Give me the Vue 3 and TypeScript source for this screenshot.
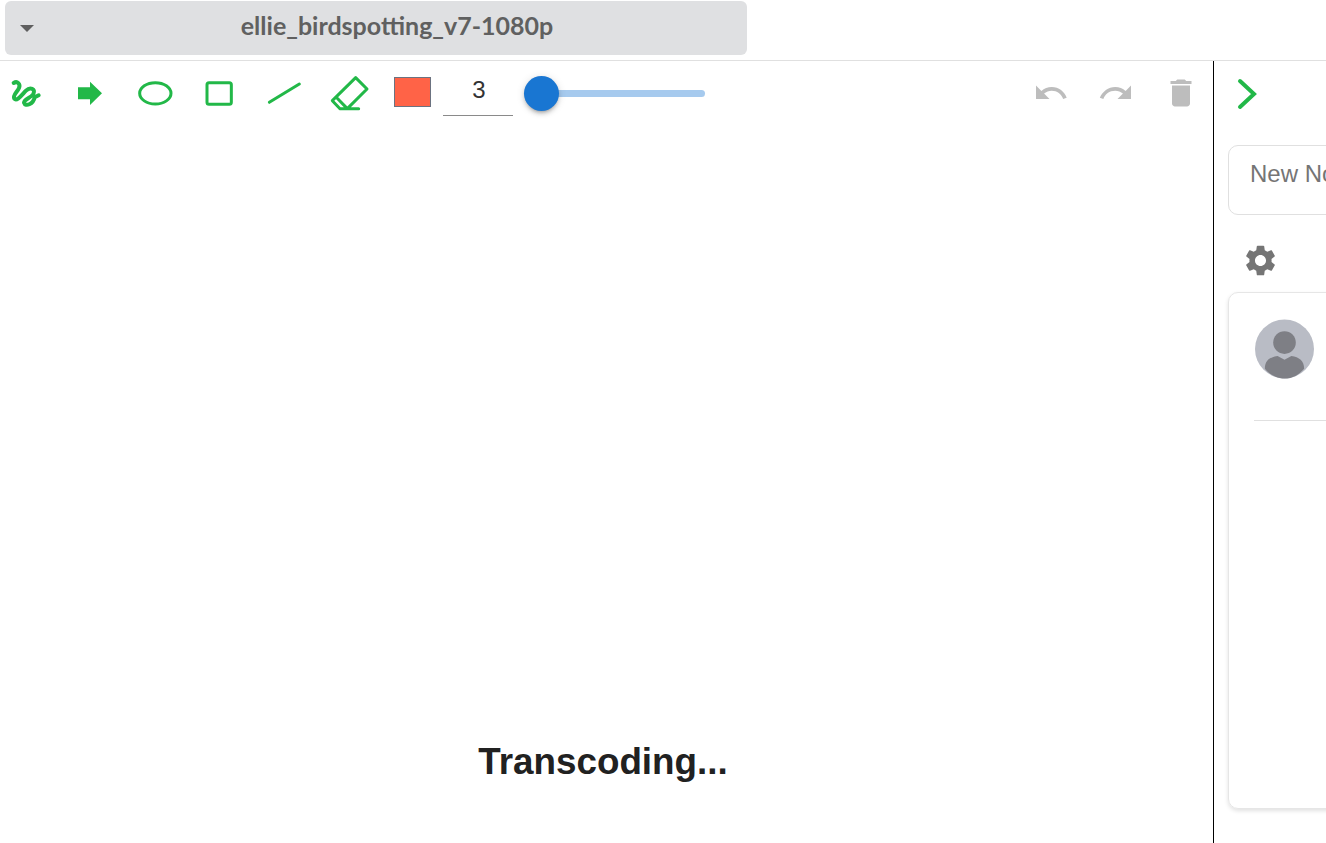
<script setup lang="ts">
const title = 'ellie_birdspotting_v7-1080p'
const penWidth = 3
</script>

<template>
  <div class="page">
    <header class="top">
      <div class="file-select">
        <span class="caret"></span>
        <span class="file-name">{{ title }}</span>
      </div>
    </header>

    <div class="body">
      <main class="main">
        <div class="toolbar">
          <svg class="tool" viewBox="30 57 90 90">
            <path class="line" stroke-width="12" d="M41 69 C52 62 62 72 57 84 C52 96 37 106 43 116 C51 125 66 104 78 92 C90 80 108 86 100 102 C92 114 72 118 72 128 C76 142 100 132 104 112 L116 106" />
          </svg>
          <svg class="tool" viewBox="225 57 90 90">
            <path class="fill" d="M234 82H270V65L306 100L270 135V118H234Z" />
          </svg>
          <svg class="tool" viewBox="420 57 90 90">
            <ellipse class="line" stroke-width="9" cx="466" cy="100" rx="47" ry="32" />
          </svg>
          <svg class="tool" viewBox="615 57 90 90">
            <rect class="line" stroke-width="9" x="621" y="68" width="73" height="65" rx="6" />
          </svg>
          <svg class="tool" viewBox="90 57 90 90">
            <path class="line" stroke-width="9" d="M88 127L178 72" />
          </svg>
          <svg class="tool" viewBox="285 57 90 90">
            <path class="line" stroke-width="9" stroke-linejoin="round" d="M347 53L381 87L322 146H300L277 122ZM288 111L322 146M300 146H356" />
          </svg>

          <div class="swatch"></div>
          <input class="pen-size" type="text" :value="penWidth" />

          <div class="slider">
            <div class="slider-track"></div>
            <div class="slider-thumb"></div>
          </div>

          <div class="history">
            <svg class="hist-icon" viewBox="0 0 24 24">
              <path d="M12.5 8c-2.65 0-5.05.99-6.9 2.6L2 7v9h9l-3.62-3.62c1.39-1.16 3.16-1.88 5.12-1.88 3.54 0 6.55 2.31 7.6 5.5l2.37-.78C21.08 11.03 17.15 8 12.5 8z" />
            </svg>
            <svg class="hist-icon" viewBox="0 0 24 24">
              <path d="M18.4 10.6C16.55 8.99 14.15 8 11.5 8c-4.65 0-8.58 3.03-10.3 7.22L3.57 16c1.05-3.19 4.05-5.5 7.93-5.5 1.95 0 3.73.72 5.12 1.88L13 16h9V7l-3.6 3.6z" />
            </svg>
            <svg class="hist-icon" viewBox="0 0 24 24">
              <path d="M6 19c0 1.1.9 2 2 2h8c1.1 0 2-.9 2-2V7H6v12zM19 4h-3.5l-1-1h-5l-1 1H5v2h14V4z" />
            </svg>
          </div>
        </div>

        <div class="stage">
          <h2 class="status">Transcoding...</h2>
        </div>
      </main>

      <aside class="panel">
        <svg class="collapse" viewBox="0 0 30 30">
          <path class="line" stroke-width="4" stroke-linecap="butt" d="M2 2L16 15L2 28" />
        </svg>
        <div class="note-box">New Note</div>
        <svg class="gear" viewBox="0 0 24 24">
          <path d="M19.14 12.94c.04-.3.06-.61.06-.94 0-.32-.02-.64-.07-.94l2.03-1.58c.18-.14.23-.41.12-.61l-1.92-3.32c-.12-.22-.37-.29-.59-.22l-2.39.96c-.5-.38-1.03-.7-1.62-.94l-.36-2.54c-.04-.24-.24-.41-.48-.41h-3.84c-.24 0-.43.17-.47.41l-.36 2.54c-.59.24-1.13.57-1.62.94l-2.39-.96c-.22-.08-.47 0-.59.22L2.74 8.87c-.12.21-.08.47.12.61l2.03 1.58c-.05.3-.09.63-.09.94s.02.64.07.94l-2.03 1.58c-.18.14-.23.41-.12.61l1.92 3.32c.12.22.37.29.59.22l2.39-.96c.5.38 1.03.7 1.62.94l.36 2.54c.05.24.24.41.48.41h3.84c.24 0 .44-.17.47-.41l.36-2.54c.59-.24 1.13-.56 1.62-.94l2.39.96c.22.08.47 0 .59-.22l1.92-3.32c.12-.22.07-.47-.12-.61l-2.01-1.58zM12 15.6c-1.98 0-3.6-1.62-3.6-3.6s1.62-3.6 3.6-3.6 3.6 1.62 3.6 3.6-1.62 3.6-3.6 3.6z" />
        </svg>
        <div class="card">
          <svg class="avatar" viewBox="0 0 60 60">
            <circle cx="30" cy="30" r="30" fill="#b9bcc5" />
            <circle cx="30" cy="23.5" r="11.5" fill="#7e7f85" />
            <path fill="#7e7f85" d="M10 50C10 42 15 38 23 37L30 41L37 37C45 38 50 42 50 50C45 56 38 60 30 60C22 60 15 56 10 50Z" />
          </svg>
          <div class="divider"></div>
        </div>
      </aside>
    </div>
  </div>
</template>

<style scoped>
.page {
  display: flex;
  flex-direction: column;
  height: 843px;
  overflow: hidden;
  background: #fff;
  font-family: "Liberation Sans", Arial, sans-serif;
}

/* header */
.top {
  flex: none;
  height: 61px;
  box-sizing: border-box;
  border-bottom: 1px solid #e0e0e0;
  padding: 1px 0 0 5px;
}
.file-select {
  display: flex;
  align-items: center;
  width: 742px;
  height: 54px;
  padding: 0 0 7px 15px;
  box-sizing: border-box;
  background: #dfe0e2;
  border-radius: 6px;
}
.caret {
  width: 0;
  height: 0;
  border-left: 7px solid transparent;
  border-right: 7px solid transparent;
  border-top: 7px solid #5f5f5f;
  margin: 7px 13px 0 0;
  flex: none;
}
.file-name {
  flex: 1;
  text-align: center;
  font-family: Lato, sans-serif;
  font-weight: 700;
  font-size: 25px;
  color: #606060;
}

.body {
  flex: 1;
  display: flex;
  min-height: 0;
}
.main {
  width: 1214px;
  flex: none;
  box-sizing: border-box;
  border-right: 1px solid #000;
  display: flex;
  flex-direction: column;
}

/* toolbar */
.toolbar {
  display: flex;
  align-items: flex-start;
  padding: 18px 14px 0 10px;
  height: 69px;
  box-sizing: border-box;
}
.tool {
  width: 30px;
  height: 30px;
  flex: none;
  margin-right: 35px;
  overflow: visible;
}
.line {
  fill: none;
  stroke: #22b848;
  stroke-linecap: round;
}
.fill {
  fill: #22b848;
}
.swatch {
  width: 37px;
  height: 30px;
  flex: none;
  box-sizing: border-box;
  margin: -2px 0 0 -6px;
  background: #ff6347;
  border: 1px solid #6b7280;
}
.pen-size {
  width: 70px;
  height: 41px;
  flex: none;
  margin: -4px 0 0 12px;
  padding: 0 0 11px 2px;
  box-sizing: border-box;
  border: none;
  border-bottom: 1px solid #8a8a8a;
  outline: none;
  text-align: center;
  font-family: "Liberation Sans", Arial, sans-serif;
  font-size: 24px;
  color: #333;
  background: transparent;
}
.slider {
  position: relative;
  width: 181px;
  height: 35px;
  flex: none;
  margin: -3px 0 0 11px;
}
.slider-track {
  position: absolute;
  left: 0;
  right: 0;
  top: 14px;
  height: 7px;
  border-radius: 4px;
  background: #a6caee;
}
.slider-thumb {
  position: absolute;
  left: 0;
  top: 0;
  width: 35px;
  height: 35px;
  border-radius: 50%;
  background: #1976d2;
  box-shadow: 0 3px 3px -2px rgba(0, 0, 0, 0.2), 0 3px 4px rgba(0, 0, 0, 0.14), 0 1px 8px rgba(0, 0, 0, 0.12);
}
.history {
  margin: -4px 0 0 auto;
  display: flex;
  gap: 29px;
}
.hist-icon {
  width: 36px;
  height: 36px;
  fill: #bdbdbd;
}

/* stage */
.stage {
  flex: 1;
  display: flex;
  align-items: flex-end;
  justify-content: center;
  padding: 0 7px 60px 0;
}
.status {
  margin: 0;
  font-size: 36.8px;
  font-weight: 700;
  line-height: 42px;
  color: #212121;
}

/* right panel */
.panel {
  flex: 1;
  min-width: 0;
  overflow: hidden;
  padding: 18px 0 0 14px;
}
.collapse {
  display: block;
  width: 30px;
  height: 30px;
  margin-left: 10px;
  overflow: visible;
}
.note-box {
  width: 400px;
  height: 70px;
  margin-top: 36px;
  box-sizing: border-box;
  display: flex;
  align-items: center;
  padding: 0 0 12px 21px;
  border: 1px solid #e0e0e0;
  border-radius: 10px;
  font-size: 24px;
  color: #757575;
}
.gear {
  display: block;
  width: 37px;
  height: 37px;
  margin: 27px 0 0 14px;
  fill: #757575;
}
.card {
  width: 400px;
  height: 517px;
  margin-top: 13px;
  box-sizing: border-box;
  padding: 26px 0 0 26px;
  border: 1px solid #e6e6e6;
  border-radius: 10px;
  box-shadow: 0 2px 4px rgba(0, 0, 0, 0.12);
}
.avatar {
  display: block;
  width: 59px;
  height: 60px;
  filter: blur(0.5px);
}
.divider {
  height: 1px;
  margin: 41px 0 0 -1px;
  background: #e0e0e0;
}
</style>

<style>
html,
body {
  margin: 0;
  background: #fff;
}
</style>
